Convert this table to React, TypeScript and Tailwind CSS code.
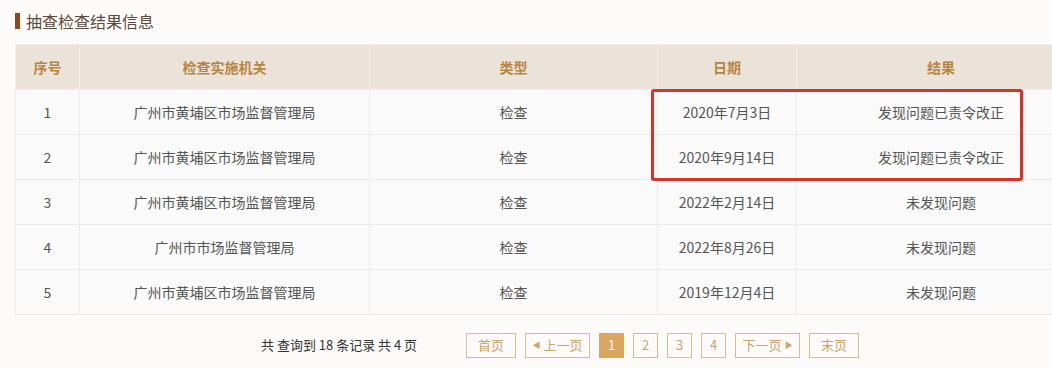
import React from "react";

const rows = [
  { no: "1", org: "广州市黄埔区市场监督管理局", type: "检查", date: "2020年7月3日", result: "发现问题已责令改正" },
  { no: "2", org: "广州市黄埔区市场监督管理局", type: "检查", date: "2020年9月14日", result: "发现问题已责令改正" },
  { no: "3", org: "广州市黄埔区市场监督管理局", type: "检查", date: "2022年2月14日", result: "未发现问题" },
  { no: "4", org: "广州市市场监督管理局", type: "检查", date: "2022年8月26日", result: "未发现问题" },
  { no: "5", org: "广州市黄埔区市场监督管理局", type: "检查", date: "2019年12月4日", result: "未发现问题" },
];

export default function App() {
  return (
    <div
      className="relative w-[1052px] h-[368px] overflow-hidden bg-[#fcfbfa] pl-[15px]"
      style={{ fontFamily: '"Noto Sans CJK SC", "Liberation Sans", sans-serif' }}
    >
      {/* Title */}
      <div className="flex items-center h-[44px] pb-[3px]">
        <span className="w-[5px] h-[16px] bg-[#8a4a1e] mr-[6px]" />
        <span className="text-[16px] text-[#5e4a3c]">抽查检查结果信息</span>
      </div>

      {/* Table */}
      <table className="border-collapse table-fixed w-[1070px] text-[14px]">
        <colgroup>
          <col className="w-[64px]" />
          <col className="w-[290px]" />
          <col className="w-[288px]" />
          <col className="w-[139px]" />
          <col className="w-[289px]" />
        </colgroup>
        <thead>
          <tr className="h-[45px] bg-[#ebe3da]">
            {["序号", "检查实施机关", "类型", "日期", "结果"].map((h) => (
              <th key={h} className="border border-[#f3eee9] font-bold text-[#b58641] text-center">
                {h}
              </th>
            ))}
          </tr>
        </thead>
        <tbody>
          {rows.map((r) => (
            <tr key={r.no} className="h-[45px] bg-[#fafafa] text-[#555555]">
              <td className="border border-[#ebebeb] text-center">{r.no}</td>
              <td className="border border-[#ebebeb] text-center">{r.org}</td>
              <td className="border border-[#ebebeb] text-center">{r.type}</td>
              <td className="border border-[#ebebeb] text-center">{r.date}</td>
              <td className="border border-[#ebebeb] text-center">{r.result}</td>
            </tr>
          ))}
        </tbody>
      </table>

      {/* Pagination */}
      <div className="flex items-center h-[54px] pt-[6px] text-[13px]">
        <span className="ml-[246px] text-[#333333]">共 查询到 18 条记录 共 4 页</span>
        <div className="flex items-center gap-[9px] ml-[49px] text-[#c9a46c]">
          <span className="w-[50px] h-[25px] border border-[#d8bd91] flex items-center justify-center">首页</span>
          <span className="w-[65px] h-[25px] border border-[#d8bd91] flex items-center justify-center gap-[3px]">
            <span className="text-[8px]">◀</span>上一页
          </span>
          <span className="w-[25px] h-[25px] bg-[#dba660] text-white flex items-center justify-center">1</span>
          <span className="w-[25px] h-[25px] border border-[#d8bd91] flex items-center justify-center">2</span>
          <span className="w-[25px] h-[25px] border border-[#d8bd91] flex items-center justify-center">3</span>
          <span className="w-[25px] h-[25px] border border-[#d8bd91] flex items-center justify-center">4</span>
          <span className="w-[65px] h-[25px] border border-[#d8bd91] flex items-center justify-center gap-[3px]">
            下一页<span className="text-[8px]">▶</span>
          </span>
          <span className="w-[50px] h-[25px] border border-[#d8bd91] flex items-center justify-center">末页</span>
        </div>
      </div>

      {/* Annotation box */}
      <div className="absolute left-[651px] top-[89px] w-[372px] h-[92px] border-[3px] border-[#d9322b] rounded-[3px]" />
    </div>
  );
}
